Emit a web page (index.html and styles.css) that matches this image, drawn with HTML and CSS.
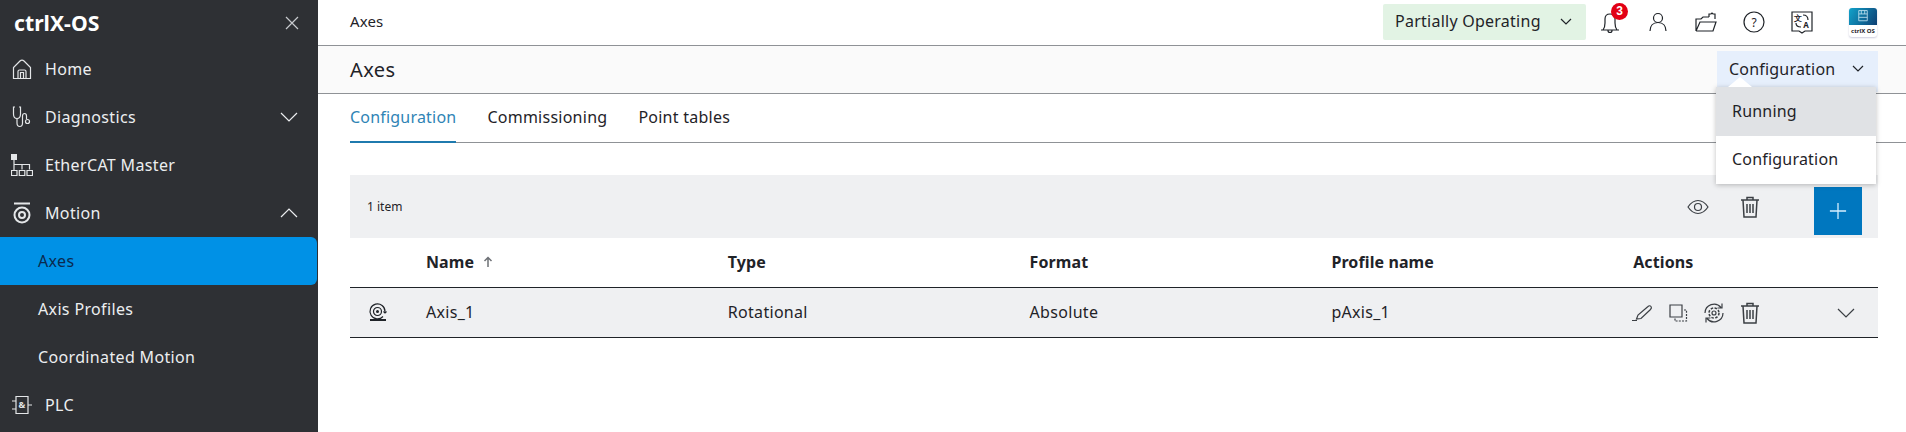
FILE: index.html
```html
<!DOCTYPE html>
<html lang="en">
<head>
<meta charset="utf-8">
<title>Axes</title>
<link rel="stylesheet" href="styles.css">
</head>
<body>
<aside class="sidebar">
  <div class="brand"><span>ctrlX-OS</span>
    <svg class="ico close" viewBox="0 0 16 16"><path d="M2 2l12 12M14 2L2 14"/></svg>
  </div>
  <nav>
    <a class="item"><svg class="ico nav-ico" viewBox="0 0 22 22"><path d="M2.500 20.500V9.500L9 3c1.200-1.200 2.800-1.200 4 0l6.500 6.500V20.500zM7 20.500v-7c0-1 .5-1.500 1.500-1.500h5c1 0 1.500.5 1.500 1.500v7M9.500 20.500v-6h3v6"/></svg><span>Home</span></a>
    <a class="item"><svg class="ico nav-ico" viewBox="0 0 22 22"><path d="M4 1H2.500v7c0 3 1 4.500 3.500 4.500S9.500 11 9.500 8V1H8M6 12.500v4.500c0 2 1 3.500 2.800 3.500s2.700-1.500 2.700-3.500V10c0-1.800 1-2.500 2-2.500s2 .7 2 2.500v3"/><circle cx="16.500" cy="15.500" r="2"/></svg><span>Diagnostics</span><svg class="ico chev" viewBox="0 0 18 10"><path d="M1 1l8 8 8-8"/></svg></a>
    <a class="item"><svg class="ico nav-ico" viewBox="0 0 22 22"><rect class="solid" x="0" y="0" width="6" height="6"/><path d="M3 6v10M3 10.500h15.500v5M11 10.500v5M.5 16.500h5.500v5H.5zM8.300 16.500h5.500v5H8.300zM16 16.500h5.500v5H16z"/></svg><span>EtherCAT Master</span></a>
    <a class="item"><svg class="ico nav-ico" viewBox="0 0 22 22"><path class="thick" d="M3 1.500h16"/><circle class="thick" cx="11" cy="13" r="7.500"/><circle class="thick" cx="11" cy="13" r="3"/></svg><span>Motion</span><svg class="ico chev" viewBox="0 0 18 10"><path d="M1 9l8-8 8 8"/></svg></a>
    <a class="item sub active"><span>Axes</span></a>
    <a class="item sub"><span>Axis Profiles</span></a>
    <a class="item sub"><span>Coordinated Motion</span></a>
    <a class="item"><svg class="ico nav-ico" viewBox="0 0 22 22"><path d="M5 2.500h12v17H5zM1 7h4M1 15h4M17 11h4"/><text x="11" y="14" class="amp">&amp;</text></svg><span>PLC</span></a>
  </nav>
</aside>
<main class="main">
  <header class="topbar">
    <div class="crumb">Axes</div>
    <div class="top-actions">
      <button class="status">Partially Operating<svg class="ico small-chev" viewBox="0 0 12 7"><path d="M1 1l5 5 5-5"/></svg></button>
      <span class="tool bell"><svg class="ico tool-ico" viewBox="0 0 24 24"><path d="M3 20h18M5 20c1.500-2 2-4 2-7V9c0-3 2-5 5-5s5 2 5 5v4c0 3 .5 5 2 7M10 20.500c0 1.500 1 2 2 2s2-.5 2-2"/></svg><b class="badge">3</b></span>
      <span class="tool"><svg class="ico tool-ico" viewBox="0 0 24 24"><circle cx="12" cy="8" r="4.500"/><path d="M4 21c0-5 3-8.500 8-8.500s8 3.500 8 8.500"/></svg></span>
      <span class="tool"><svg class="ico tool-ico" viewBox="0 0 24 24"><path d="M2 21V9h5l2-2h6M2 21h17l3-9H6l-4 9M15 7V4h2l1-1 1 1h2v5"/></svg></span>
      <span class="tool"><svg class="ico tool-ico" viewBox="0 0 24 24"><circle cx="12" cy="12" r="10"/><text x="12" y="16.500" class="q">?</text></svg></span>
      <span class="tool"><svg class="ico tool-ico" viewBox="0 0 24 24"><path d="M2 2h20v19h-7l-3 2-3-2H2z"/><text x="16" y="18" class="tr">A</text><text x="8" y="11" class="tr">文</text><path d="M13 5c3 0 5 1 5 5M11 17c-3 0-5-1-5-4"/></svg></span>
      <span class="applogo"><span class="applogo-top"><svg viewBox="0 0 26 20" class="applogo-ico"><path d="M8 3h10v12H8zM8 7h10M8 11h10M11 3v4M15 3v4"/></svg></span><span class="applogo-txt">ctrlX OS</span></span>
    </div>
  </header>
  <section class="subhead">
    <h1>Axes</h1>
    <button class="mode">Configuration<svg class="ico small-chev" viewBox="0 0 12 7"><path d="M1 1l5 5 5-5"/></svg></button>
  </section>
  <div class="tabs">
    <a class="tab on">Configuration</a>
    <a class="tab">Commissioning</a>
    <a class="tab">Point tables</a>
  </div>
  <section class="content">
    <div class="toolbar">
      <span class="count">1 item</span>
      <span class="tb-actions">
        <svg class="ico act eye" viewBox="0 0 24 24"><path d="M2 12c3-4.500 6-6.500 10-6.500s7 2 10 6.500c-3 4.500-6 6.500-10 6.500S5 16.500 2 12z"/><circle cx="12" cy="12" r="3.500"/></svg>
        <svg class="ico act trash" viewBox="0 0 24 24"><path d="M3 5h18M9 5V2.500h6V5M5 5l1 17h12l1-17M9 9v9M12 9v9M15 9v9"/></svg>
        <button class="add"><svg class="ico plus" viewBox="0 0 20 20"><path d="M10 1v18M1 10h18"/></svg></button>
      </span>
    </div>
    <div class="grid head">
      <span></span>
      <span class="sort">Name <svg class="ico arrow" viewBox="0 0 10 12"><path d="M5 11V1.500M1.500 5L5 1.500 8.500 5"/></svg></span>
      <span>Type</span><span>Format</span><span>Profile name</span><span>Actions</span>
    </div>
    <div class="grid row">
      <svg class="ico axis" viewBox="0 0 20 20"><path class="thick" d="M2 18h16"/><path d="M17 9.500a7.500 7.500 0 1 0-2 5M15.500 9.500l1.500 1.500 1.500-1.500"/><circle cx="9.500" cy="9.500" r="4"/><circle class="solid" cx="9.500" cy="9.500" r="1.500"/></svg>
      <span>Axis_1</span><span>Rotational</span><span>Absolute</span><span>pAxis_1</span>
      <span class="row-actions">
        <svg class="ico act" viewBox="0 0 24 24"><path d="M2 19.500h5M6.500 18l1.500-4L18 5.500c1-1 2.200-1 3 0s.5 2-.5 3L11 17.500z"/></svg>
        <svg class="ico act" viewBox="0 0 24 24"><path d="M4 4h12v12H4z"/><path class="dash" d="M18 9h2.500v11H9v-2.500"/></svg>
        <svg class="ico act" viewBox="0 0 24 24"><path d="M3 12a9 9 0 0 1 16-5.500M21 12a9 9 0 0 1-16 5.500M20 2.500V7h-4.500M4 21.500V17h4.500"/><circle cx="12" cy="12" r="5" class="dash-gear"/><circle cx="12" cy="12" r="2"/></svg>
        <svg class="ico act trash" viewBox="0 0 24 24"><path d="M3 5h18M9 5V2.500h6V5M5 5l1 17h12l1-17M9 9v9M12 9v9M15 9v9"/></svg>
        <svg class="ico row-chev" viewBox="0 0 18 10"><path d="M1 1l8 8 8-8"/></svg>
      </span>
    </div>
  </section>
</main>
<div class="menu">
  <span class="caret"></span>
  <a class="opt hover">Running</a>
  <a class="opt">Configuration</a>
</div>
</body>
</html>
```
FILE: styles.css
```css
* { box-sizing: border-box; }
html, body { margin: 0; height: 432px; overflow: hidden; }
body { display: flex; font-family: "Noto Sans", "Open Sans", sans-serif; font-size: 16px; color: #1f2328; background: #fff; }
button { font: inherit; color: inherit; border: 0; }
.ico { fill: none; stroke: currentColor; stroke-width: 1.2; flex: none; display: block; }
.solid { fill: currentColor; stroke: none; }

.sidebar { width: 318px; flex: none; height: 432px; background: #2e3034; color: #f0f1f2; }
.brand { height: 45px; display: flex; align-items: center; justify-content: space-between; padding: 0 18px 0 14px; font-weight: 700; font-size: 21.200px; color: #fff; }
.close { width: 16px; height: 16px; color: #c8cace; }
.item { height: 48px; display: flex; align-items: center; padding-left: 11px; color: #eceef0; letter-spacing: .35px; }
.item span { flex: 1; }
.nav-ico { width: 22px; height: 22px; margin-right: 12px; color: #e4e6e8; }
.thick { stroke-width: 2; }
.amp { font-size: 9px; font-weight: 700; text-anchor: middle; fill: currentColor; stroke: none; }
.chev { width: 18px; height: 10px; margin-right: 20px; }
.sub { padding-left: 38px; }
.active { background: #0091e6; color: #0b2a4f; border-radius: 0 6px 6px 0; margin-right: 1px; }

.main { flex: 1; min-width: 0; display: flex; flex-direction: column; }
.topbar { height: 46px; display: flex; align-items: center; justify-content: space-between; padding: 0 29px 1px 32px; border-bottom: 1px solid #8f9296; }
.crumb { font-size: 15px; margin-top: -2px; letter-spacing: .1px; }
.top-actions { display: flex; align-items: center; }
.status { width: 203px; height: 36px; background: #e2f3e4; border-radius: 2px; display: flex; align-items: center; justify-content: space-between; padding: 0 14px 2px 12px; font-size: 16px; letter-spacing: .25px; }
.small-chev { width: 12px; height: 7px; }
.tool { width: 48px; display: flex; justify-content: center; position: relative; }
.tool-ico { width: 24px; height: 24px; }
.badge { position: absolute; left: 25px; top: -7px; width: 17px; height: 17px; border-radius: 50%; background: #e20015; color: #fff; font: 700 12px/17px "Liberation Sans", sans-serif; text-align: center; }
.q, .tr { font-size: 12px; text-anchor: middle; fill: currentColor; stroke: none; }
.tr { font-size: 8px; font-weight: 700; }
.applogo { width: 28px; height: 29px; margin-left: 23px; border-radius: 3px; box-shadow: 0 1px 2px #ccd; overflow: hidden; display: flex; flex-direction: column; }
.applogo-top { height: 17px; background: linear-gradient(120deg, #11a3cb, #0e3f73); }
.applogo-ico { width: 28px; height: 17px; fill: none; stroke: #bfe2f0; stroke-width: 1; display: block; }
.applogo-txt { font-size: 6px; font-weight: 700; line-height: 12px; text-align: center; white-space: nowrap; }

.subhead { height: 48px; background: #fafafa; border-bottom: 1px solid #8f9296; display: flex; align-items: center; justify-content: space-between; padding: 0 28px 0 32px; }
h1 { margin: 0; font-size: 20px; font-weight: 400; letter-spacing: .4px; }
.mode { width: 161px; height: 41px; margin-top: 3px; background: #e6effc; display: flex; align-items: center; justify-content: space-between; padding: 0 14px 5px 12px; font-size: 16px; letter-spacing: .2px; }

.tabs { height: 49px; margin-left: 32px; border-bottom: 1px solid #8f9296; display: flex; gap: 31px; }
.tab { height: 48px; padding-top: 12px; letter-spacing: .25px; }
.tab.on { color: #2f84b5; border-bottom: 2px solid #1f7aae; height: 49px; letter-spacing: .2px; }

.content { margin: 32px 28px 0 32px; }
.toolbar { height: 63px; background: #eff0f2; display: flex; align-items: center; justify-content: space-between; padding-left: 17px; }
.count { font-size: 12px; }
.tb-actions { display: flex; align-items: center; margin-right: 16px; }
.act { width: 24px; height: 24px; color: #3b3f44; }
.trash { stroke-width: 1.5; }
.dash { stroke-dasharray: 2 1.2; }
.dash-gear { stroke-dasharray: 2.500 1.420; stroke-width: 1.500; }
.tb-actions .eye { margin-right: 28px; }
.add { width: 48px; height: 48px; background: #0077bf; margin-left: 52px; margin-top: 8px; display: flex; align-items: center; justify-content: center; padding: 0; }
.plus { width: 18px; height: 18px; color: #d8f0ff; stroke-width: 1.4; }

.grid { display: grid; grid-template-columns: 76px repeat(4, 301.800px) 1fr; align-items: center; }
.head { height: 49px; font-weight: 700; font-size: 16px; letter-spacing: .1px; padding-bottom: 2px; }
.sort { display: flex; align-items: center; gap: 5px; white-space: pre; }
.arrow { width: 10px; height: 12px; color: #6e7176; stroke-width: 1.500; }
.row { height: 51px; background: #eff0f2; border-top: 1px solid #1f2328; border-bottom: 1px solid #1f2328; font-size: 16px; letter-spacing: .3px; padding-bottom: 2px; }
.axis { width: 20px; height: 20px; margin-left: 18px; color: #1f2328; }
.row-actions { display: flex; align-items: center; gap: 12px; margin-left: -3px; margin-top: 2px; }
.row-chev { width: 18px; height: 10px; margin-left: 63px; color: #3b3f44; }

.menu { position: absolute; left: 1716px; top: 87px; width: 160px; background: #fff; box-shadow: 0 1px 5px rgba(0,0,0,.25); }
.opt { display: block; height: 48px; padding: 0 16px; line-height: 47px; font-size: 16px; letter-spacing: .2px; }
.hover { background: #e0e2e5; height: 49px; line-height: 48px; }
.caret { position: absolute; left: 12px; top: -10px; width: 0; height: 0; border: 12px solid transparent; border-top: 0; border-bottom: 10px solid #fff; }
```
